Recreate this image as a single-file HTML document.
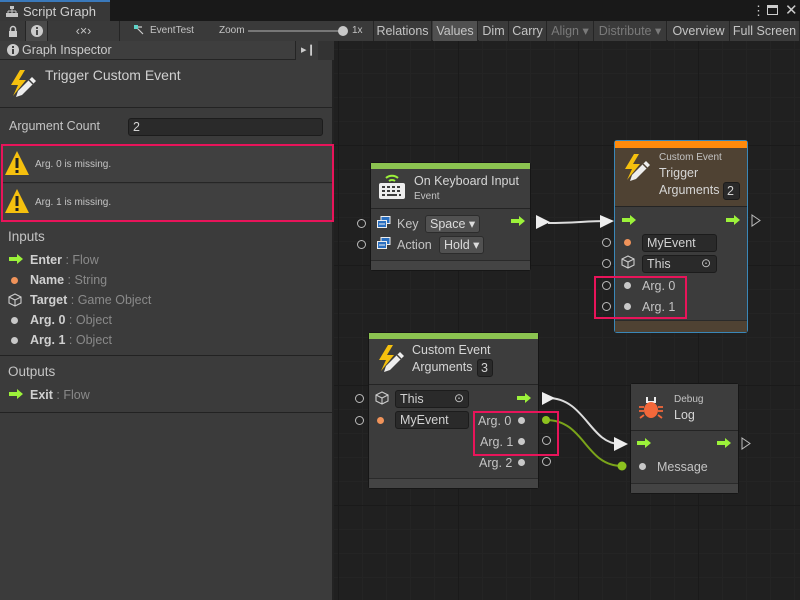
<!DOCTYPE html>
<html><head><meta charset="utf-8"><style>
*{margin:0;padding:0;box-sizing:border-box}
body{width:800px;height:600px;overflow:hidden;background:#202020;font-family:"Liberation Sans",sans-serif;font-size:12px;color:#c4c4c4;position:relative}
.a{position:absolute}
.grid{position:absolute;left:334px;top:41px;width:466px;height:559px;
background-image:linear-gradient(#1a1a1a 1px,transparent 1px),linear-gradient(90deg,#1a1a1a 1px,transparent 1px),linear-gradient(#242424 1px,transparent 1px),linear-gradient(90deg,#242424 1px,transparent 1px);
background-size:120px 120px,120px 120px,24px 24px,24px 24px;background-position:0 104px,124px 0,0 8px,4px 0}
.btn{position:absolute;top:21px;height:20px;background:#3a3a3a;border-right:1px solid #252525;color:#c4c4c4;font-size:12.5px;line-height:20px;text-align:center}
.dis{color:#7a7a7a}
.node{position:absolute;background:#3c3c3c;border:1px solid #161616;border-radius:3px}
.hd{position:absolute;left:0;right:0;background:#3d3d3d;border-bottom:1px solid #242424}
.ft{position:absolute;left:0;right:0;bottom:0;height:10px;background:#444;border-top:1px solid #2a2a2a}
.t{position:absolute;white-space:nowrap}
.port{position:absolute;width:9px;height:9px;border:1px solid #bbb;border-radius:50%}
.dot{position:absolute;width:7px;height:7px;border-radius:50%;background:#c8c8c8}
.fld{position:absolute;height:18px;background:#2a2a2a;border:1px solid #1c1c1c;border-radius:3px;line-height:16px;padding-left:4px;color:#d2d2d2;font-size:12.5px}
.dd{position:absolute;height:18px;background:#515151;border:1px solid #2c2c2c;border-radius:3px;line-height:16px;padding-left:4px;color:#dcdcdc;font-size:12.5px}
.red{position:absolute;border:2px solid #e8145a}
.ins .row{position:absolute;left:10px;font-size:12.5px;white-space:nowrap}
.ins b{color:#d0d0d0}
.ins span.g{color:#8a8a8a}
</style></head><body>
<div class="grid"></div>
<div class="a" style="left:0;top:0;width:800px;height:21px;background:#191919"></div>
<div class="a" style="left:0;top:0;width:110px;height:21px;background:#383838;border-top:2px solid #3a79bb"></div>
<svg class="a" style="left:6px;top:6px" width="12" height="11" viewBox="0 0 12 11"><rect x="4" y="0" width="4" height="3" fill="#c4c4c4"/><path d="M6 3v3M2 5h8M2 5v2M10 5v2M6 5v2" stroke="#c4c4c4"/><rect x="0" y="7" width="4" height="4" fill="#c4c4c4"/><rect x="4" y="7" width="4" height="4" fill="#c4c4c4"/><rect x="8" y="7" width="4" height="4" fill="#c4c4c4"/></svg>
<div class="t" style="left:23px;top:4px;font-size:13px;color:#d0d0d0">Script Graph</div>
<div class="t" style="left:752px;top:3px;font-size:13px;color:#ccc">⋮</div>
<div class="a" style="left:767px;top:5px;width:11px;height:10px;border:1.5px solid #ccc;border-top-width:3px"></div>
<div class="t" style="left:785px;top:1px;font-size:15px;color:#ccc">✕</div>
<div class="a" style="left:0;top:21px;width:800px;height:20px;background:#3c3c3c;border-bottom:1px solid #252525"></div>
<div class="btn" style="left:0;width:26px"></div>
<svg class="a" style="left:8px;top:25px" width="10" height="12" viewBox="0 0 10 12"><path d="M2.5 6V4a2.5 2.5 0 0 1 5 0v2" stroke="#ccc" stroke-width="1.5" fill="none"/><rect x="1" y="6" width="8" height="6" fill="#ccc"/></svg>
<div class="btn" style="left:26px;width:22px;background:#4a4a4a"></div>
<svg class="a" style="left:31px;top:25px" width="12" height="12"><circle cx="6" cy="6" r="6" fill="#ccc"/><rect x="5" y="5" width="2" height="5" fill="#4a4a4a"/><rect x="5" y="2" width="2" height="2" fill="#4a4a4a"/></svg>
<div class="btn" style="left:48px;width:72px">‹×›</div>
<div class="btn" style="left:120px;width:254px;text-align:left"></div>
<svg class="a" style="left:133px;top:24px" width="12" height="12"><path d="M3 3L10 10M3 3h6" stroke="#ccc" stroke-width="1.2"/><rect x="1" y="1" width="4" height="4" fill="#5fd3c8"/></svg>
<div class="t" style="left:150px;top:25px;font-size:10px">EventTest</div>
<div class="t" style="left:219px;top:25px;font-size:10px">Zoom</div>
<div class="a" style="left:248px;top:30px;width:94px;height:2px;background:#777"></div>
<div class="a" style="left:338px;top:26px;width:10px;height:10px;border-radius:50%;background:#c8c8c8"></div>
<div class="t" style="left:352px;top:25px;font-size:10px">1x</div>
<div class="btn" style="left:374px;width:58px">Relations</div>
<div class="btn" style="left:433px;width:45px;background:#505050">Values</div>
<div class="btn" style="left:479px;width:30px">Dim</div>
<div class="btn" style="left:509px;width:38px">Carry</div>
<div class="btn dis" style="left:547px;width:47px">Align ▾</div>
<div class="btn dis" style="left:594px;width:73px">Distribute ▾</div>
<div class="btn" style="left:668px;width:62px">Overview</div>
<div class="btn" style="left:730px;width:70px">Full Screen</div>
<div class="a" style="left:0;top:41px;width:334px;height:559px;background:#3b3b3b;border-right:2px solid #232323"></div>
<div class="a" style="left:0;top:41px;width:296px;height:19px;background:#3e3e3e;border-bottom:1px solid #242424;border-right:1px solid #242424"></div>
<svg class="a" style="left:7px;top:44px" width="12" height="12"><circle cx="6" cy="6" r="6" fill="#ccc"/><rect x="5" y="5" width="2" height="5" fill="#3e3e3e"/><rect x="5" y="2" width="2" height="2" fill="#3e3e3e"/></svg>
<div class="t" style="left:22px;top:43px;font-size:12.5px;color:#ccc">Graph Inspector</div>
<div class="t" style="left:301px;top:43px;font-size:11px;color:#ccc">▸❙</div>
<div class="a" style="left:318px;top:41px;width:16px;height:19px;background:#333"></div>
<div class="a" style="left:0;top:60px;width:332px;height:48px;background:#3c3c3c;border-bottom:1px solid #232323"></div>
<svg class="a" style="left:8px;top:68px" width="30" height="34" viewBox="0 0 30 34"><path d="M12 2L3 17h7l-5 11 13-16h-7l6-10z" fill="#f5c00e"/><path d="M24 9l4 4-14 14-6 2 2-6z" fill="#eee"/><path d="M21 12l4 4" stroke="#3c3c3c" stroke-width="1.5"/></svg>
<div class="t" style="left:45px;top:67px;font-size:14px;color:#d0d0d0">Trigger Custom Event</div>
<div class="t" style="left:9px;top:119px;font-size:12.5px">Argument Count</div>
<div class="fld" style="left:128px;top:118px;width:195px;background:#2a2a2a">2</div>
<div class="a" style="left:2px;top:146px;width:330px;height:37px;background:#404040;border-bottom:1px solid #262626"></div>
<div class="a" style="left:2px;top:184px;width:330px;height:37px;background:#404040"></div>
<svg class="a" style="left:4px;top:150px" width="26" height="26" viewBox="0 0 26 26"><path d="M13 1L25 25H1z" fill="#f5c00e"/><rect x="11.5" y="8" width="3" height="10" fill="#222"/><rect x="11.5" y="20" width="3" height="3" fill="#222"/></svg>
<svg class="a" style="left:4px;top:188px" width="26" height="26" viewBox="0 0 26 26"><path d="M13 1L25 25H1z" fill="#f5c00e"/><rect x="11.5" y="8" width="3" height="10" fill="#222"/><rect x="11.5" y="20" width="3" height="3" fill="#222"/></svg>
<div class="t" style="left:35px;top:159px;font-size:10px">Arg. 0 is missing.</div>
<div class="t" style="left:35px;top:197px;font-size:10px">Arg. 1 is missing.</div>
<div class="red" style="left:1px;top:144px;width:333px;height:78px"></div>
<div class="ins">
<div class="t" style="left:8px;top:229px;font-size:13.5px">Inputs</div>
<svg class="a" style="left:9px;top:254px" width="14" height="10"><path d="M0 3h8V0l6 5-6 5V7H0z" fill="#9cf23a"/></svg>
<div class="row" style="left:30px;top:253px"><b>Enter</b> <span class="g">: Flow</span></div>
<div class="a dot" style="left:11px;top:277px;background:#f0935a"></div>
<div class="row" style="left:30px;top:273px"><b>Name</b> <span class="g">: String</span></div>
<svg class="a" style="left:8px;top:293px" width="14" height="14" viewBox="0 0 14 14"><path d="M7 1l6 3v6l-6 3-6-3V4zM1 4l6 3 6-3M7 7v6" fill="none" stroke="#ccc" stroke-width="1.1"/></svg>
<div class="row" style="left:30px;top:293px"><b>Target</b> <span class="g">: Game Object</span></div>
<div class="a dot" style="left:11px;top:317px"></div>
<div class="row" style="left:30px;top:313px"><b>Arg. 0</b> <span class="g">: Object</span></div>
<div class="a dot" style="left:11px;top:337px"></div>
<div class="row" style="left:30px;top:333px"><b>Arg. 1</b> <span class="g">: Object</span></div>
<div class="a" style="left:0;top:355px;width:332px;height:1px;background:#222"></div>
<div class="t" style="left:8px;top:364px;font-size:13.5px">Outputs</div>
<svg class="a" style="left:9px;top:389px" width="14" height="10"><path d="M0 3h8V0l6 5-6 5V7H0z" fill="#9cf23a"/></svg>
<div class="row" style="left:30px;top:388px"><b>Exit</b> <span class="g">: Flow</span></div>
<div class="a" style="left:0;top:412px;width:332px;height:1px;background:#222"></div>
</div>

<svg class="a" style="left:0;top:0" width="800" height="600">
<path d="M548 223 C575 223 585 221 608 221" stroke="#ddd" stroke-width="2" fill="none"/>
<path d="M536 215l14 7-14 7z" fill="#eee"/><path d="M600 215l14 6-14 7z" fill="#eee"/>
<path d="M548 398 C585 398 590 444 620 444" stroke="#ddd" stroke-width="2" fill="none"/>
<path d="M542 392l13 6-13 7z" fill="#eee"/><path d="M614 437l14 7-14 7z" fill="#eee"/>
<path d="M546 420 C585 420 585 466 622 466" stroke="#7aa41a" stroke-width="2" fill="none"/>
<circle cx="546" cy="420" r="4" fill="#8dc21f"/><circle cx="622" cy="466" r="4.5" fill="#8dc21f"/>
</svg>

<div class="node" style="left:370px;top:162px;width:161px;height:109px">
<div class="a" style="left:0;top:0;width:159px;height:6px;background:#8bc350"></div>
<div class="hd" style="top:6px;height:40px"></div>
<div class="ft"></div>
</div>
<svg class="a" style="left:377px;top:172px" width="30" height="28" viewBox="0 0 30 28"><path d="M9 6a9 9 0 0 1 12 0M12 9a5 5 0 0 1 6 0" stroke="#9cf23a" stroke-width="2" fill="none"/><rect x="2" y="11" width="26" height="16" rx="2" fill="#eee"/><g fill="#3d3d3d"><rect x="5" y="14" width="3" height="2"/><rect x="10" y="14" width="3" height="2"/><rect x="15" y="14" width="3" height="2"/><rect x="20" y="14" width="3" height="2"/><rect x="5" y="18" width="3" height="2"/><rect x="10" y="18" width="3" height="2"/><rect x="15" y="18" width="3" height="2"/><rect x="20" y="18" width="3" height="2"/><rect x="5" y="22" width="3" height="2"/><rect x="10" y="22" width="10" height="2"/><rect x="22" y="22" width="2" height="2"/></g></svg>
<div class="t" style="left:414px;top:174px;font-size:12.5px;color:#d6d6d6">On Keyboard Input</div>
<div class="t" style="left:414px;top:191px;font-size:10px">Event</div>
<div class="port" style="left:357px;top:219px"></div><div class="port" style="left:357px;top:240px"></div>
<svg class="a" style="left:377px;top:216px" width="14" height="13"><rect x="4" y="0.5" width="9" height="7" fill="#2a6fc0" stroke="#eee"/><rect x="0.5" y="4.5" width="9" height="7" fill="#2a6fc0" stroke="#eee"/><path d="M2 8h6" stroke="#eee"/></svg>
<svg class="a" style="left:377px;top:237px" width="14" height="13"><rect x="4" y="0.5" width="9" height="7" fill="#2a6fc0" stroke="#eee"/><rect x="0.5" y="4.5" width="9" height="7" fill="#2a6fc0" stroke="#eee"/><path d="M2 8h6" stroke="#eee"/></svg>
<div class="t" style="left:397px;top:217px;font-size:12.5px">Key</div>
<div class="dd" style="left:425px;top:215px;width:55px">Space ▾</div>
<div class="t" style="left:397px;top:238px;font-size:12.5px">Action</div>
<div class="dd" style="left:439px;top:236px;width:45px">Hold ▾</div>
<svg class="a" style="left:511px;top:216px" width="14" height="10"><path d="M0 3h8V0l6 5-6 5V7H0z" fill="#9cf23a"/></svg>

<div class="node" style="left:614px;top:140px;width:134px;height:193px;border-color:#3a87b8">
<div class="a" style="left:0;top:0;width:132px;height:7px;background:#ff8a0c"></div>
<div class="hd" style="top:7px;height:59px;background:#4f4233"></div>
<div class="ft" style="height:12px;background:#4f4233"></div>
</div>
<svg class="a" style="left:622px;top:152px" width="30" height="34" viewBox="0 0 30 34"><path d="M12 2L3 17h7l-5 11 13-16h-7l6-10z" fill="#f5c00e"/><path d="M24 9l4 4-14 14-6 2 2-6z" fill="#eee"/><path d="M21 12l4 4" stroke="#4f4233" stroke-width="1.5"/></svg>
<div class="t" style="left:659px;top:152px;font-size:10px">Custom Event</div>
<div class="t" style="left:659px;top:166px;font-size:12.5px;color:#d6d6d6">Trigger</div>
<div class="t" style="left:659px;top:183px;font-size:12.5px;color:#d6d6d6">Arguments</div>
<div class="fld" style="left:723px;top:182px;width:17px;height:18px;padding-left:3px">2</div>
<svg class="a" style="left:622px;top:215px" width="14" height="10"><path d="M0 3h8V0l6 5-6 5V7H0z" fill="#9cf23a"/></svg>
<svg class="a" style="left:726px;top:215px" width="14" height="10"><path d="M0 3h8V0l6 5-6 5V7H0z" fill="#9cf23a"/></svg>
<svg class="a" style="left:751px;top:214px" width="10" height="13"><path d="M1 1l8 5.5-8 5.5z" fill="none" stroke="#bbb"/></svg>
<div class="port" style="left:602px;top:238px"></div><div class="port" style="left:602px;top:259px"></div>
<div class="port" style="left:602px;top:281px"></div><div class="port" style="left:602px;top:302px"></div>
<div class="dot" style="left:624px;top:239px;background:#f0935a"></div>
<svg class="a" style="left:621px;top:255px" width="14" height="14" viewBox="0 0 14 14"><path d="M7 1l6 3v6l-6 3-6-3V4zM1 4l6 3 6-3M7 7v6" fill="none" stroke="#ccc" stroke-width="1.1"/></svg>
<div class="fld" style="left:642px;top:234px;width:75px">MyEvent</div>
<div class="fld" style="left:642px;top:255px;width:75px">This</div>
<div class="t" style="left:701px;top:256px;font-size:12px">⊙</div>
<div class="dot" style="left:624px;top:282px"></div><div class="dot" style="left:624px;top:303px"></div>
<div class="t" style="left:642px;top:279px;font-size:12.5px">Arg. 0</div>
<div class="t" style="left:642px;top:300px;font-size:12.5px">Arg. 1</div>
<div class="red" style="left:594px;top:276px;width:93px;height:43px"></div>

<div class="node" style="left:368px;top:332px;width:171px;height:157px">
<div class="a" style="left:0;top:0;width:169px;height:6px;background:#8bc350"></div>
<div class="hd" style="top:6px;height:46px"></div>
<div class="ft"></div>
</div>
<svg class="a" style="left:376px;top:343px" width="30" height="34" viewBox="0 0 30 34"><path d="M12 2L3 17h7l-5 11 13-16h-7l6-10z" fill="#f5c00e"/><path d="M24 9l4 4-14 14-6 2 2-6z" fill="#eee"/><path d="M21 12l4 4" stroke="#3d3d3d" stroke-width="1.5"/></svg>
<div class="t" style="left:412px;top:343px;font-size:12.5px;color:#d6d6d6">Custom Event</div>
<div class="t" style="left:412px;top:360px;font-size:12.5px;color:#d6d6d6">Arguments</div>
<div class="fld" style="left:477px;top:359px;width:16px;padding-left:3px">3</div>
<div class="port" style="left:355px;top:394px"></div><div class="port" style="left:355px;top:416px"></div>
<svg class="a" style="left:375px;top:391px" width="14" height="14" viewBox="0 0 14 14"><path d="M7 1l6 3v6l-6 3-6-3V4zM1 4l6 3 6-3M7 7v6" fill="none" stroke="#ccc" stroke-width="1.1"/></svg>
<div class="fld" style="left:395px;top:390px;width:74px">This</div>
<div class="t" style="left:454px;top:391px;font-size:12px">⊙</div>
<div class="dot" style="left:377px;top:417px;background:#f0935a"></div>
<div class="fld" style="left:395px;top:411px;width:74px">MyEvent</div>
<svg class="a" style="left:517px;top:393px" width="14" height="10"><path d="M0 3h8V0l6 5-6 5V7H0z" fill="#9cf23a"/></svg>
<div class="t" style="left:478px;top:414px;font-size:12.5px">Arg. 0</div>
<div class="t" style="left:480px;top:435px;font-size:12.5px">Arg. 1</div>
<div class="t" style="left:479px;top:456px;font-size:12.5px">Arg. 2</div>
<div class="dot" style="left:518px;top:417px"></div><div class="dot" style="left:518px;top:438px"></div><div class="dot" style="left:518px;top:459px"></div>
<div class="port" style="left:542px;top:436px"></div><div class="port" style="left:542px;top:457px"></div>
<div class="red" style="left:473px;top:411px;width:86px;height:45px"></div>

<div class="node" style="left:630px;top:383px;width:109px;height:111px">
<div class="hd" style="top:0;height:47px"></div>
<div class="ft"></div>
</div>
<svg class="a" style="left:638px;top:395px" width="26" height="26" viewBox="0 0 26 26"><path d="M9 2v5M17 2v5M8 7h10" stroke="#eee" stroke-width="2"/><ellipse cx="13" cy="15" rx="7" ry="8" fill="#f4683a"/><path d="M6 12H1M6 16H1M6 20l-4 3M20 12h5M20 16h5M20 20l4 3" stroke="#f4683a" stroke-width="1.8"/></svg>
<div class="t" style="left:674px;top:394px;font-size:10px">Debug</div>
<div class="t" style="left:674px;top:408px;font-size:12.5px;color:#d6d6d6">Log</div>
<svg class="a" style="left:637px;top:438px" width="14" height="10"><path d="M0 3h8V0l6 5-6 5V7H0z" fill="#9cf23a"/></svg>
<svg class="a" style="left:717px;top:438px" width="14" height="10"><path d="M0 3h8V0l6 5-6 5V7H0z" fill="#9cf23a"/></svg>
<svg class="a" style="left:741px;top:437px" width="10" height="13"><path d="M1 1l8 5.5-8 5.5z" fill="none" stroke="#bbb"/></svg>
<div class="dot" style="left:639px;top:463px"></div>
<div class="t" style="left:657px;top:460px;font-size:12.5px">Message</div>
</body></html>
